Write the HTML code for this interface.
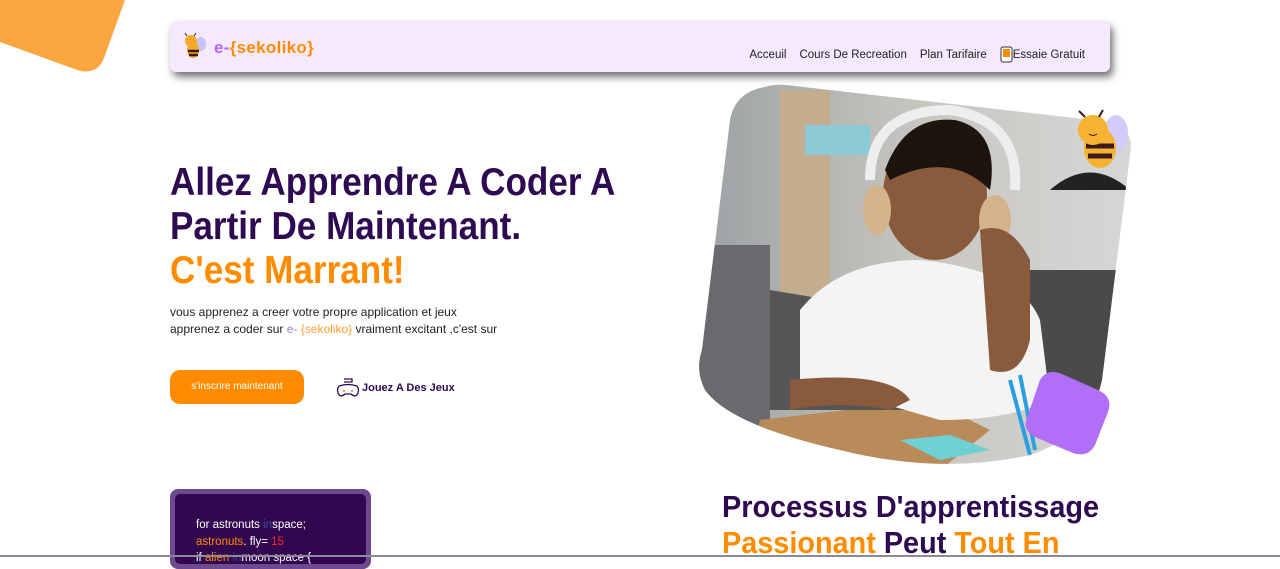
<!DOCTYPE html>
<html><head><meta charset="utf-8"><style>
*{margin:0;padding:0;box-sizing:border-box}
body{width:1280px;height:557px;overflow:hidden;background:#fff;font-family:"Liberation Sans",sans-serif;position:relative}
.nav{position:absolute;left:170px;top:21px;width:940px;height:51px;background:#f5e9fd;border-radius:6px;box-shadow:3px 5px 8px rgba(0,0,0,.55)}
.logo{position:absolute;left:44px;top:17px;font-weight:bold;font-size:17px;color:#ff8c00;letter-spacing:.3px}
.logo b{color:#b266f5}
.links{position:absolute;right:25px;top:25px;font-size:11.5px;color:#222;display:flex;gap:13px;align-items:center}
.h1{position:absolute;left:170px;top:161px;font-weight:bold;font-size:39px;line-height:44px;color:#2e0a52;transform:scaleX(.9);transform-origin:left top;white-space:nowrap}
.or{color:#ff8c00}
.p{position:absolute;left:170px;top:304px;font-size:12px;line-height:17px;color:#222}
.btn{position:absolute;left:170px;top:370px;width:134px;height:34px;border-radius:10px;background:#ff8c00;color:#fff;font-size:10px;text-align:center;line-height:34px}
.jeux{position:absolute;left:336px;top:378px;font-size:11px;font-weight:bold;color:#2e0a52;display:flex;align-items:center;gap:2px}
.code{position:absolute;left:170px;top:489px;width:201px;height:80px;background:#6d4a8f;border-radius:8px;padding:5px}
.code div{background:#33074f;height:100%;border-radius:5px;padding:23px 0 0 21px;color:#fff;font-size:11.5px;line-height:16.5px}
.h2{position:absolute;left:722px;top:489px;font-weight:bold;font-size:31px;line-height:36px;color:#2e0a52;transform:scaleX(.93);transform-origin:left top;white-space:nowrap}
.line{position:absolute;left:0;top:555px;width:1280px;height:2px;background:#8a8a9a}
</style></head><body>
<svg style="position:absolute;left:0;top:0" width="130" height="80"><path d="M0 0H125L104 58Q98 74 80 71L0 42Z" fill="#fba63f"/></svg>
<div class="nav">
<svg style="position:absolute;left:10px;top:11px" width="30" height="30" viewBox="0 0 30 30"><ellipse cx="21" cy="12" rx="5" ry="7" fill="#c9c3f5"/><ellipse cx="13" cy="18" rx="6" ry="8" fill="#f4a92a"/><path d="M8 19h11M9 23h9" stroke="#3a1a1a" stroke-width="2.5"/><circle cx="11" cy="9" r="6" fill="#f4a92a"/><path d="M7 4l-2-3M14 4l2-3" stroke="#3a1a1a"/></svg>
<div class="logo"><b>e-</b>{sekoliko}</div>
<div class="links"><span>Acceuil</span><span>Cours De Recreation</span><span>Plan Tarifaire</span><span style="display:flex;align-items:center"><svg width="13" height="17" viewBox="0 0 13 17"><rect x="1" y="1" width="11" height="15" rx="2" fill="#fff" stroke="#333"/><rect x="3" y="3" width="7" height="8" fill="#ff8c00"/></svg>Essaie Gratuit</span></div>
</div>
<div class="h1">Allez Apprendre A Coder A<br>Partir De Maintenant.<br><span class="or">C'est Marrant!</span></div>
<div class="p">vous apprenez a creer votre propre application et jeux<br>apprenez a coder sur <span style="color:#9b7fc4">e-</span> <span style="color:#ffa033">{sekoliko}</span> vraiment excitant ,c'est sur</div>
<div class="btn">s'inscrire maintenant</div>
<div class="jeux"><svg width="24" height="20" viewBox="0 0 24 20"><path d="M8 1h8v3H8M3 8q9-3 18 0q3 4 0 9q-3 2-6-1h-6q-3 3-6 1q-3-5 0-9z" fill="none" stroke="#2e0a52" stroke-width="1.3"/><circle cx="8" cy="13" r="1.2" fill="#f5a623"/><circle cx="16" cy="13" r="1.2" fill="#aaa"/></svg>Jouez A Des Jeux</div>
<div class="code"><div>for astronuts <span style="color:#3a4a9a">in</span>space;<br><span style="color:#ff8c00">astronuts</span>. fly= <span style="color:#ff2a2a">15</span><br>if <span style="color:#ff8c00">alien</span> <span style="color:#3a4a9a">in</span>moon space {</div></div>
<svg style="position:absolute;left:690px;top:80px" width="470" height="390" viewBox="0 0 470 390">
<defs><clipPath id="c"><path d="M75 7Q85 3 105 6L420 42Q445 48 440 75L412 300Q400 355 340 375Q250 395 150 370Q40 345 15 310Q5 290 12 270L40 40Q45 12 75 7Z"/></clipPath>
<linearGradient id="bg" x1="0" x2="1"><stop offset="0" stop-color="#9aa0a3"/><stop offset=".5" stop-color="#c9c6c0"/><stop offset="1" stop-color="#d8d9da"/></linearGradient></defs>
<g clip-path="url(#c)">
<rect width="470" height="390" fill="url(#bg)"/>
<rect x="90" y="10" width="50" height="220" fill="#c3ad8e"/>
<rect x="115" y="45" width="65" height="30" fill="#8ccad6"/>
<path d="M340 190H460V330H340Z" fill="#4a4a4a"/>
<path d="M360 110q40-35 80 0z" fill="#222"/>
<rect x="0" y="165" width="80" height="225" fill="#6a6a6e"/>
<path d="M70 340L240 320L300 350L250 390H60Z" fill="#b98a5a"/>
<path d="M80 210L200 230L215 240V330H80Z" fill="#555"/>
<path d="M110 230Q150 180 230 180Q330 190 350 240L360 320Q320 340 250 340L180 320Q130 330 110 300Z" fill="#f4f4f4"/>
<ellipse cx="245" cy="115" rx="52" ry="65" fill="#8a5a3c"/>
<path d="M195 90Q215 35 265 40Q310 50 300 110Q260 70 200 100Z" fill="#1d1410"/>
<path d="M180 100Q180 30 260 30Q330 40 325 110" fill="none" stroke="#eee" stroke-width="10"/>
<ellipse cx="187" cy="130" rx="14" ry="25" fill="#d4b48a"/>
<ellipse cx="305" cy="140" rx="16" ry="25" fill="#d4b48a"/>
<path d="M290 150Q320 140 340 180L340 260Q330 300 300 290Z" fill="#8a5a3c"/>
<path d="M100 300Q200 290 220 320L200 330Q150 320 100 330Z" fill="#8a5a3c"/>
<path d="M210 360L260 355L300 370L250 380Z" fill="#6fd0d3"/>
<path d="M320 300L340 375M330 295L345 370" stroke="#2aa0e0" stroke-width="4"/>
</g>
<path d="M350 300Q357 288 372 294L410 311Q423 318 418 332L405 365Q398 378 383 373L345 357Q332 350 337 338Z" fill="#b16ef7"/>
<g transform="translate(378,28)"><ellipse cx="48" cy="25" rx="12" ry="18" fill="#d3cbfb"/><ellipse cx="32" cy="40" rx="16" ry="20" fill="#f6b232"/><path d="M18 38h28M20 48h24" stroke="#3a1a1a" stroke-width="5"/><circle cx="25" cy="22" r="15" fill="#f6b232"/><path d="M17 9l-6-6M31 9l4-7" stroke="#3a1a1a" stroke-width="2"/><path d="M21 26q4 3 8 0" stroke="#3a1a1a" fill="none"/></g>
</svg>
<div class="h2">Processus D'apprentissage<br><span class="or">Passionant</span> Peut <span class="or">Tout En</span></div>
<div class="line"></div>
</body></html>
